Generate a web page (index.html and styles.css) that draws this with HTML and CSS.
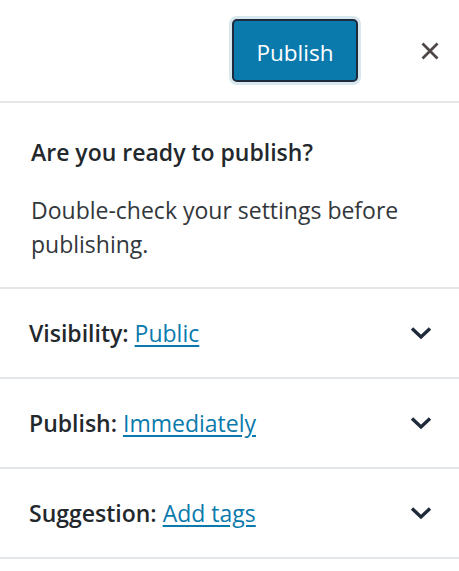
FILE: index.html
```html
<!DOCTYPE html>
<html>
<head>
<meta charset="utf-8">
<link rel="stylesheet" href="styles.css">
</head>
<body>
<div class="panel">
  <div class="header">
    <button class="publish-btn">Publish</button>
    <button class="close-btn" aria-label="Close">
      <svg width="20" height="20" viewBox="0 0 20 20"><path d="M2.5 2.5 L17.5 17.5 M17.5 2.5 L2.5 17.5" stroke="#4f4648" stroke-width="2.8" fill="none"/></svg>
    </button>
  </div>
  <div class="intro">
    <h2 class="intro-title">Are you ready to publish?</h2>
    <p class="intro-text">Double-check your settings before publishing.</p>
  </div>
  <div class="row">
    <span class="row-label"><strong>Visibility:</strong> <a class="row-link">Public</a></span>
    <svg class="chev" width="24" height="24" viewBox="0 0 24 24"><path d="M3 7.5 L12 16 L21 7.5" stroke="#1f2a3a" stroke-width="3.4" fill="none"/></svg>
  </div>
  <div class="row">
    <span class="row-label"><strong>Publish:</strong> <a class="row-link">Immediately</a></span>
    <svg class="chev" width="24" height="24" viewBox="0 0 24 24"><path d="M3 7.5 L12 16 L21 7.5" stroke="#1f2a3a" stroke-width="3.4" fill="none"/></svg>
  </div>
  <div class="row">
    <span class="row-label"><strong>Suggestion:</strong> <a class="row-link">Add tags</a></span>
    <svg class="chev" width="24" height="24" viewBox="0 0 24 24"><path d="M3 7.5 L12 16 L21 7.5" stroke="#1f2a3a" stroke-width="3.4" fill="none"/></svg>
  </div>
</div>
</body>
</html>
```
FILE: styles.css
```css
html, body {
  margin: 0;
  padding: 0;
  background: #fff;
}
body {
  font-family: "Open Sans", "Noto Sans", sans-serif;
  color: #23282d;
}
.header {
  height: 101px;
  border-bottom: 2px solid #e4e7e6;
  display: flex;
  align-items: center;
  justify-content: flex-end;
  padding-right: 11px;
}
.publish-btn {
  width: 126px;
  height: 63px;
  margin-top: -1px;
  background: #0a7aad;
  color: #fff;
  font-family: inherit;
  font-size: 22.5px;
  border: 2px solid #1e2b3c;
  border-radius: 5px;
  box-shadow: 0 0 0 3px #d8e6ee;
  padding: 4px 0 0;
}
.close-btn {
  width: 36px;
  height: 40px;
  margin-left: 54px;
  background: none;
  border: 0;
  padding: 0;
  display: flex;
  align-items: center;
  justify-content: center;
}
.intro {
  padding: 33px 31px 26px;
  border-bottom: 2px solid #e2e6e9;
}
.intro-title {
  margin: 0;
  font-size: 23px;
  font-weight: 600;
  line-height: 32px;
}
.intro-text {
  margin: 25px 0 0;
  font-size: 23px;
  line-height: 34px;
  color: #32373c;
}
.row {
  height: 88px;
  border-bottom: 2px solid #e2e6e9;
  display: flex;
  align-items: center;
  justify-content: space-between;
  padding: 0 26px 0 29px;
}
.row-label {
  font-size: 23px;
}
.row-label strong {
  font-weight: 600;
}
.row-link {
  color: #0a7aad;
  text-decoration: underline;
  text-underline-offset: 3px;
}
.chev {
  display: block;
}
```
